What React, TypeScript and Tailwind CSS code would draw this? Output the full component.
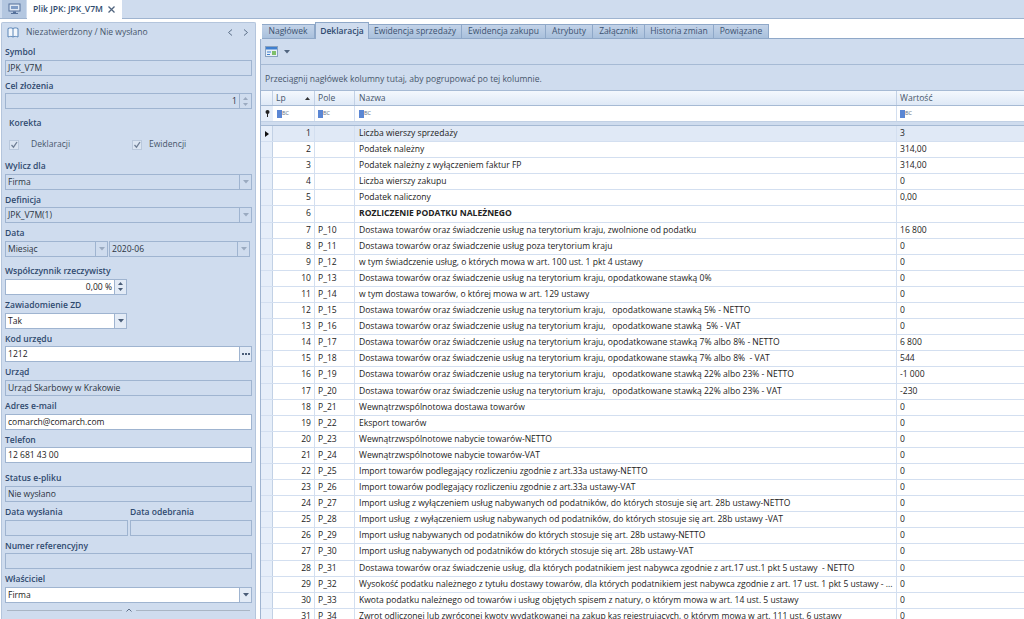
import type { ReactNode } from "react";

const tabs = [
  { label: "Nagłówek", w: "w-[53px]" },
  { label: "Deklaracja", w: "w-[54px]", active: true },
  { label: "Ewidencja sprzedaży", w: "w-[93px]" },
  { label: "Ewidencja zakupu", w: "w-[84px]" },
  { label: "Atrybuty", w: "w-[47px]" },
  { label: "Załączniki", w: "w-[52px]" },
  { label: "Historia zmian", w: "w-[69px]" },
  { label: "Powiązane", w: "w-[55px]" },
];

const D = "Dostawa towarów oraz świadczenie usług na terytorium kraju,";
const rows: [string, string, string][] = [
  ["", "Liczba wierszy sprzedaży", "3"],
  ["", "Podatek należny", "314,00"],
  ["", "Podatek należny z wyłączeniem faktur FP", "314,00"],
  ["", "Liczba wierszy zakupu", "0"],
  ["", "Podatek naliczony", "0,00"],
  ["", "ROZLICZENIE PODATKU NALEŻNEGO", ""],
  ["P_10", `${D} zwolnione od podatku`, "16 800"],
  ["P_11", "Dostawa towarów oraz świadczenie usług poza terytorium kraju", "0"],
  ["P_12", "w tym świadczenie usług, o których mowa w art. 100 ust. 1 pkt 4 ustawy", "0"],
  ["P_13", `${D} opodatkowane stawką 0%`, "0"],
  ["P_14", "w tym dostawa towarów, o której mowa w art. 129 ustawy", "0"],
  ["P_15", `${D}   opodatkowane stawką 5% - NETTO`, "0"],
  ["P_16", `${D}   opodatkowane stawką  5% - VAT`, "0"],
  ["P_17", `${D} opodatkowane stawką 7% albo 8% - NETTO`, "6 800"],
  ["P_18", `${D} opodatkowane stawką 7% albo 8%  - VAT`, "544"],
  ["P_19", `${D}   opodatkowane stawką 22% albo 23% - NETTO`, "-1 000"],
  ["P_20", `${D}   opodatkowane stawką 22% albo 23% - VAT`, "-230"],
  ["P_21", "Wewnątrzwspólnotowa dostawa towarów", "0"],
  ["P_22", "Eksport towarów", "0"],
  ["P_23", "Wewnątrzwspólnotowe nabycie towarów-NETTO", "0"],
  ["P_24", "Wewnątrzwspólnotowe nabycie towarów-VAT", "0"],
  ["P_25", "Import towarów podlegający rozliczeniu zgodnie z art.33a ustawy-NETTO", "0"],
  ["P_26", "Import towarów podlegający rozliczeniu zgodnie z art.33a ustawy-VAT", "0"],
  ["P_27", "Import usług z wyłączeniem usług nabywanych od podatników, do których stosuje się art. 28b ustawy-NETTO", "0"],
  ["P_28", "Import usług  z wyłączeniem usług nabywanych od podatników, do których stosuje się art. 28b ustawy -VAT", "0"],
  ["P_29", "Import usług nabywanych od podatników do których stosuje się art. 28b ustawy-NETTO", "0"],
  ["P_30", "Import usług nabywanych od podatników do których stosuje się art. 28b ustawy-VAT", "0"],
  ["P_31", "Dostawa towarów oraz świadczenie usług, dla których podatnikiem jest nabywca zgodnie z art.17 ust.1 pkt 5 ustawy  - NETTO", "0"],
  ["P_32", "Wysokość podatku należnego z tytułu dostawy towarów, dla których podatnikiem jest nabywca zgodnie z art. 17 ust. 1 pkt 5 ustawy - ...", "0"],
  ["P_33", "Kwota podatku należnego od towarów i usług objętych spisem z natury, o którym mowa w art. 14 ust. 5 ustawy", "0"],
  ["P_34", "Zwrot odliczonej lub zwróconej kwoty wydatkowanej na zakup kas rejestrujących, o którym mowa w art. 111 ust. 6 ustawy", "0"],
];

function Label({ children, className = "" }: { children: ReactNode; className?: string }) {
  return (
    <div className={`h-[17.7px] pt-[3px] font-semibold leading-[14px] text-[#2f4a6e] ${className}`}>
      {children}
    </div>
  );
}

function Field({
  value = "",
  white,
  className = "",
  right,
  children,
}: {
  value?: string;
  white?: boolean;
  className?: string;
  right?: boolean;
  children?: ReactNode;
}) {
  return (
    <div
      className={`flex h-[16px] items-stretch border border-[#9fb4d0] ${
        white ? "bg-white text-[#222]" : "bg-[#cfdcee] text-[#2b3442]"
      } ${className}`}
    >
      <div className={`min-w-0 flex-1 truncate px-[2px] leading-[14px] ${right ? "text-right" : ""}`}>{value}</div>
      {children}
    </div>
  );
}

function Arrow({ dark }: { dark?: boolean }) {
  return (
    <div className={`flex w-[12px] items-center justify-center border-l border-[#9fb4d0] ${dark ? "bg-[#e3ebf6]" : ""}`}>
      <svg width="6" height="4" viewBox="0 0 6 4">
        <path d="M0 0h6L3 3.500z" fill={dark ? "#4a5d78" : "#9aaac0"} />
      </svg>
    </div>
  );
}

function Spin({ dark }: { dark?: boolean }) {
  const c = dark ? "#4a5d78" : "#9aaac0";
  return (
    <div className={`flex w-[12px] flex-col items-center justify-center gap-[3px] border-l border-[#9fb4d0] ${dark ? "bg-[#e3ebf6]" : ""}`}>
      <svg width="5" height="3" viewBox="0 0 5 3">
        <path d="M0 3h5L2.500 0z" fill={c} />
      </svg>
      <svg width="5" height="3" viewBox="0 0 5 3">
        <path d="M0 0h5L2.500 3z" fill={c} />
      </svg>
    </div>
  );
}

function Check({ label, className = "", gap }: { label: string; className?: string; gap: string }) {
  return (
    <div className={`flex items-center ${className}`}>
      <div className="flex h-[10px] w-[10px] items-center justify-center border border-[#b9c8dc] bg-[#dbe5f2]">
        <svg width="8" height="8" viewBox="0 0 8 8">
          <path d="M1.500 4l2 2.200L7 1" fill="none" stroke="#6f7f95" strokeWidth="1.300" />
        </svg>
      </div>
      <span className={`${gap} text-[#47566b]`}>{label}</span>
    </div>
  );
}

function AbcIcon() {
  return (
    <div className="flex items-center">
      <div className="h-[8px] w-[5px] bg-[#5a86d4]" />
      <span className="text-[5.500px] leading-none text-[#5d6f88]">BC</span>
    </div>
  );
}

export default function App() {
  return (
    <div className="h-[619px] w-[1024px] overflow-hidden bg-white font-['Open_Sans',sans-serif] text-[8.550px] text-[#222]">
      {/* Top bar */}
      <div className="flex h-[19px] border-b border-[#9fb4d0] bg-[#cfdcee]">
        <div className="ml-[2px] flex h-[18px] w-[24px] items-center justify-center bg-[#b4c7e0]">
          <svg width="13" height="12" viewBox="0 0 13 12">
            <rect x="1" y="1" width="11" height="7" fill="#dfe8f4" stroke="#55709a" />
            <rect x="3" y="3" width="7" height="3" fill="#7f9cc6" />
            <path d="M5 8.500h3V10h2v1H3v-1h2z" fill="#55709a" />
          </svg>
        </div>
        <div className="ml-[1px] flex h-[19px] w-[95px] items-center bg-white pl-[6px] font-semibold text-[#2f4a6e]">
          <span>Plik JPK: JPK_V7M</span>
          <svg className="ml-[5px]" width="7" height="7" viewBox="0 0 7 7">
            <path d="M.5.5l6 6M6.500.5l-6 6" stroke="#51657f" strokeWidth="1.300" />
          </svg>
        </div>
      </div>

      <div className="flex h-[600px]">
        {/* Left panel */}
        <aside className="mt-[3px] ml-[1px] h-[597px] w-[255px] rounded-t-[2px] border border-b-0 border-[#b4c5dc] bg-[#cfdcee] pr-[3px] pl-[3px]">
          <div className="flex h-[19px] items-center pl-[2px] text-[#47566b]">
            <svg width="12" height="11" viewBox="0 0 12 11">
              <path d="M1 1.500c2-.8 3.500-.8 5 0 1.500-.8 3-.8 5 0v8.500c-2-.8-3.500-.8-5 0-1.500-.8-3-.8-5 0z" fill="#f3f7fc" stroke="#5b86b8" />
              <path d="M6 1.500v8.500" stroke="#5b86b8" />
            </svg>
            <span className="ml-[7px] flex-1">Niezatwierdzony / Nie wysłano</span>
            <svg className="mr-[3px]" width="22" height="7" viewBox="0 0 22 7">
              <path d="M5 .5L1.500 3.500 5 6.500M17 .5l3.500 3L17 6.500" fill="none" stroke="#5d6f88" />
            </svg>
          </div>
          <Label>Symbol</Label>
          <Field value="JPK_V7M" />
          <Label>Cel złożenia</Label>
          <Field value="1" right>
            <Spin />
          </Field>
          <div className="mt-[4px] pl-[4px]">
            <Label>Korekta</Label>
          </div>
          <div className="mt-[5px] flex h-[17px] pl-[4px]">
            <Check label="Deklaracji" className="w-[123px]" gap="ml-[12px]" />
            <Check label="Ewidencji" gap="ml-[7px]" />
          </div>
          <Label className="mt-[3px]">Wylicz dla</Label>
          <Field value="Firma">
            <Arrow />
          </Field>
          <Label>Definicja</Label>
          <Field value="JPK_V7M(1)">
            <Arrow />
          </Field>
          <Label>Data</Label>
          <div className="flex gap-[1px]">
            <Field value="Miesiąc" className="w-[103px]">
              <Arrow />
            </Field>
            <Field value="2020-06" className="w-[141px]">
              <Arrow />
            </Field>
          </div>
          <Label className="mt-[4px]">Współczynnik rzeczywisty</Label>
          <Field value="0,00 %" white right className="w-[122px]">
            <Spin dark />
          </Field>
          <Label>Zawiadomienie ZD</Label>
          <Field value="Tak" white className="w-[122px]">
            <Arrow dark />
          </Field>
          <Label>Kod urzędu</Label>
          <Field value="1212" white>
            <div className="flex w-[12px] items-center justify-center border-l border-[#9fb4d0] bg-[#e3ebf6] text-[#4a5d78]">
              <svg width="8" height="2" viewBox="0 0 8 2">
                <path d="M0 0h2v2H0zM3 0h2v2H3zM6 0h2v2H6z" fill="#4a5d78" />
              </svg>
            </div>
          </Field>
          <Label>Urząd</Label>
          <Field value="Urząd Skarbowy w Krakowie" />
          <Label>Adres e-mail</Label>
          <Field value="comarch@comarch.com" white />
          <Label>Telefon</Label>
          <Field value="12 681 43 00" white />
          <Label className="mt-[5px]">Status e-pliku</Label>
          <Field value="Nie wysłano" />
          <div className="flex gap-[2px]">
            <div className="w-[123px]">
              <Label>Data wysłania</Label>
              <Field />
            </div>
            <div className="flex-1">
              <Label>Data odebrania</Label>
              <Field />
            </div>
          </div>
          <Label>Numer referencyjny</Label>
          <Field />
          <Label>Właściciel</Label>
          <Field value="Firma" white>
            <Arrow dark />
          </Field>
          <div className="mt-[5px] flex items-center gap-[4px] px-[2px]">
            <div className="h-px flex-1 bg-[#a9b5c4]" />
            <svg width="6" height="4" viewBox="0 0 6 4">
              <path d="M.5 3.500L3 1l2.500 2.500" fill="none" stroke="#5d6f88" />
            </svg>
            <div className="h-px flex-1 bg-[#a9b5c4]" />
          </div>
        </aside>

        {/* Right side */}
        <main className="ml-[4px] min-w-0 flex-1 pt-[4px]">
          <div className="flex h-[16px] items-end pl-[2px]">
            {tabs.map((t) => (
              <div
                key={t.label}
                className={`flex items-center justify-center border-r border-b border-[#8fa8c8] ${t.w} ${
                  t.active
                    ? "h-[17px] border-t border-l border-b-0 bg-[#cfdcee] font-semibold text-[#2f4a6e]"
                    : "h-[15px] border-t bg-gradient-to-b from-[#c3d3e8] to-[#a9c0dc] text-[#3c5270]"
                }`}
              >
                {t.label}
              </div>
            ))}
            <div className="h-px flex-1 self-end bg-[#8fa8c8]" />
          </div>

          <div className="h-[580px] border-l border-[#9fb4d0] bg-[#cfdcee]">
            {/* Toolbar */}
            <div className="flex h-[26px] items-center border-b border-[#a6bad4] pl-[4px]">
              <svg width="13" height="11" viewBox="0 0 13 11">
                <rect x=".5" y=".5" width="12" height="10" fill="#e8f0f8" stroke="#8aa2bf" />
                <rect x="1" y="1" width="11" height="2.500" fill="#3f7fcf" />
                <path d="M2 6h4M2 8.500h3" stroke="#3f7fcf" />
                <rect x="7" y="5" width="4" height="4" fill="#7fbf6a" />
              </svg>
              <svg className="ml-[6px]" width="6" height="4" viewBox="0 0 6 4">
                <path d="M0 0h6L3 3.500z" fill="#51657f" />
              </svg>
            </div>
            {/* Group panel */}
            <div className="flex h-[25px] items-end pb-[4px] pl-[4px] text-[#47566b]">
              Przeciągnij nagłówek kolumny tutaj, aby pogrupować po tej kolumnie.
            </div>

            {/* Header */}
            <div className="flex h-[16px] border-y border-[#a6bad4] bg-gradient-to-b from-[#f4f8fd] to-[#dfe9f6] text-[#47566b]">
              <div className="w-[12px] border-r border-[#c2d1e5]" />
              <div className="flex w-[42px] items-center justify-between border-r border-[#c2d1e5] pr-[4px] pl-[3px]">
                Lp
                <svg width="5" height="3" viewBox="0 0 5 3">
                  <path d="M0 3h5L2.500 0z" fill="#333" />
                </svg>
              </div>
              <div className="flex w-[40px] items-center border-r border-[#c2d1e5] pl-[3px]">Pole</div>
              <div className="flex w-[542px] items-center border-r border-[#c2d1e5] pl-[4px]">Nazwa</div>
              <div className="flex flex-1 items-center pl-[3px]">Wartość</div>
            </div>
            {/* Filter row */}
            <div className="flex h-[16px] border-b border-[#c2d1e5] bg-white">
              <div className="flex w-[12px] items-center justify-center bg-[#e6eef9]">
                <svg width="5" height="7" viewBox="0 0 5 7">
                  <circle cx="2.500" cy="2" r="2" fill="#222" />
                  <path d="M2 3h1v4H2z" fill="#222" />
                </svg>
              </div>
              <div className="flex w-[42px] items-center border-r border-[#d3dff0] pl-[4px]"><AbcIcon /></div>
              <div className="flex w-[40px] items-center border-r border-[#d3dff0] pl-[3px]"><AbcIcon /></div>
              <div className="flex w-[542px] items-center border-r border-[#d3dff0] pl-[4px]"><AbcIcon /></div>
              <div className="flex flex-1 items-center pl-[3px]"><AbcIcon /></div>
            </div>
            <div className="h-[4px] border-b border-[#a6bad4] bg-[#cfdcee]" />

            {/* Rows */}
            {rows.map(([pole, name, value], i) => (
              <div
                key={i}
                className={`flex h-[16.100px] border-b border-[#d3dff0] leading-[15px] ${
                  i === 0 ? "bg-[#e0e9f6]" : "bg-white"
                }`}
              >
                <div className="flex w-[12px] items-center justify-center border-r border-[#c2d1e5] bg-[#e6eef9]">
                  {i === 0 && (
                    <svg width="4" height="6" viewBox="0 0 4 6">
                      <path d="M0 0l4 3-4 3z" fill="#111" />
                    </svg>
                  )}
                </div>
                <div className="w-[42px] border-r border-[#d3dff0] pr-[3px] text-right">{i + 1}</div>
                <div className="w-[40px] border-r border-[#d3dff0] pl-[3px]">{pole}</div>
                <div
                  className={`w-[542px] overflow-hidden border-r border-[#d3dff0] pl-[4px] whitespace-pre ${
                    i === 5 ? "font-bold" : ""
                  }`}
                >
                  {name}
                </div>
                <div className="flex-1 pl-[3px]">{value}</div>
              </div>
            ))}
          </div>
        </main>
      </div>
    </div>
  );
}
